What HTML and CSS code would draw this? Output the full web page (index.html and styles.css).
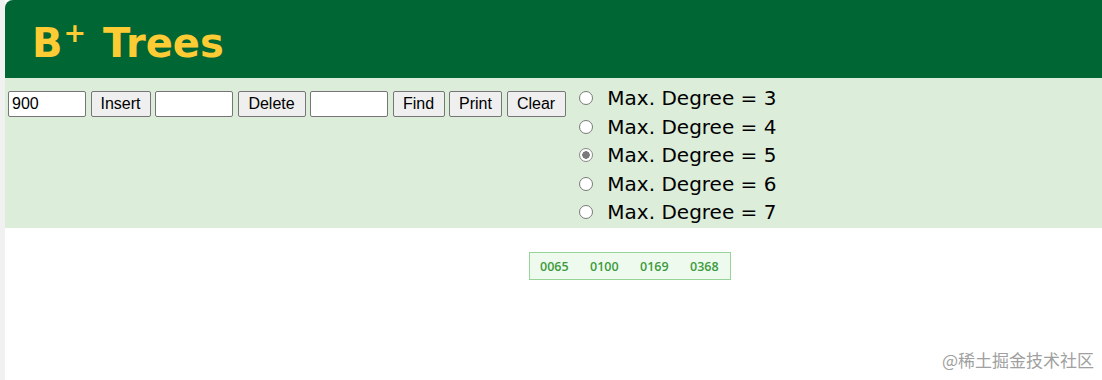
FILE: index.html
```html
<!DOCTYPE html>
<html lang="en">

<head>
    <meta charset="UTF-8">
    <title>B+ Trees</title>
    <link rel="stylesheet" href="styles.css">
</head>

<body>
    <div class="gutter"></div>
    <div class="main">
        <header class="banner">
            <h1>B<sup>+</sup> Trees</h1>
        </header>

        <div class="controls">
            <div class="toolbar">
                <input class="field" type="text" value="900">
                <button class="btn btn-insert">Insert</button>
                <input class="field" type="text">
                <button class="btn btn-delete">Delete</button>
                <input class="field" type="text">
                <button class="btn btn-find">Find</button>
                <button class="btn btn-print">Print</button>
                <button class="btn btn-clear">Clear</button>
            </div>

            <div class="degrees">
                <label><input type="radio" name="degree" value="3"> Max. Degree = 3</label>
                <label><input type="radio" name="degree" value="4"> Max. Degree = 4</label>
                <label><input type="radio" name="degree" value="5" checked> Max. Degree = 5</label>
                <label><input type="radio" name="degree" value="6"> Max. Degree = 6</label>
                <label><input type="radio" name="degree" value="7"> Max. Degree = 7</label>
            </div>
        </div>

        <div class="canvas">
            <div class="node">
                <span>0065</span>
                <span>0100</span>
                <span>0169</span>
                <span>0368</span>
            </div>
        </div>
    </div>

    <div class="watermark">@稀土掘金技术社区</div>
</body>

</html>
```

FILE: styles.css
```css
html,
body {
    margin: 0;
    height: 100%;
    background: #ffffff;
}

body {
    display: flex;
    font-family: "Liberation Sans", Arial, sans-serif;
    overflow: hidden;
}

.gutter {
    width: 5px;
    background: #f1f1f1;
    flex: none;
}

.main {
    flex: 1;
    display: flex;
    flex-direction: column;
}

.banner {
    height: 78px;
    background: #006633;
    border-top-left-radius: 8px;
    display: flex;
    align-items: center;
    padding-left: 27px;
}

.banner h1 {
    margin: 0;
    font-family: "DejaVu Sans", Verdana, sans-serif;
    font-weight: bold;
    font-size: 40px;
    color: #fdcb33;
    line-height: 1;
    padding-top: 8px;
}

.banner sup {
    font-size: 27px;
    font-weight: bold;
    vertical-align: 0;
    position: relative;
    top: -15px;
    margin: 0 3px 0 1px;
}

.controls {
    background: #dcedda;
    height: 150px;
    display: flex;
    align-items: flex-start;
    padding-left: 3px;
    box-sizing: border-box;
}

.toolbar {
    display: flex;
    gap: 4.5px;
    margin-top: 13px;
}

.field {
    width: 78px;
    height: 26px;
    box-sizing: border-box;
    border: 1px solid #767676;
    border-radius: 2px;
    padding: 1px 3px;
    font-family: "Liberation Sans", Arial, sans-serif;
    font-size: 16px;
    background: #ffffff;
}

.btn {
    height: 26px;
    box-sizing: border-box;
    padding: 0;
    font-family: "Liberation Sans", Arial, sans-serif;
    font-size: 16px;
    color: #000000;
    background: #efefef;
    border: 1px solid #767676;
    border-radius: 2px;
}

.btn-insert {
    width: 60px;
}

.btn-delete {
    width: 68px;
}

.btn-find {
    width: 52px;
}

.btn-print {
    width: 53px;
}

.btn-clear {
    width: 59px;
}

.degrees {
    margin-left: 9.5px;
    margin-top: 6px;
    display: flex;
    flex-direction: column;
}

.degrees label {
    display: flex;
    align-items: center;
    font-family: "DejaVu Sans", Verdana, sans-serif;
    font-size: 20px;
    line-height: 28.5px;
    height: 28.5px;
    white-space: pre;
}

.degrees input {
    appearance: none;
    width: 14px;
    height: 14px;
    margin: 0 8px 0 4px;
    border: 1px solid #7a7a7a;
    border-radius: 50%;
    background: #ffffff;
    box-sizing: border-box;
}

.degrees input:checked {
    border-color: #8a8a8a;
    background: radial-gradient(circle, #7a7a7a 0 3.5px, #ffffff 4px);
}

.canvas {
    flex: 1;
    display: flex;
    justify-content: center;
    align-items: flex-start;
    padding-top: 24px;
    padding-left: 153px;
}

.node {
    width: 202px;
    height: 28px;
    box-sizing: border-box;
    border: 1px solid #97d497;
    background: #effaef;
    display: flex;
    align-items: center;
    padding-left: 10px;
    gap: 20px;
    font-family: "Open Sans", "Noto Sans", sans-serif;
    font-weight: 600;
    font-size: 12.5px;
    color: #3c9a3c;
}

.node span {
    width: 30px;
}

.watermark {
    position: absolute;
    right: 8px;
    bottom: 8px;
    font-family: "Noto Sans CJK SC", sans-serif;
    font-size: 17px;
    color: #a0a0a0;
}
```
